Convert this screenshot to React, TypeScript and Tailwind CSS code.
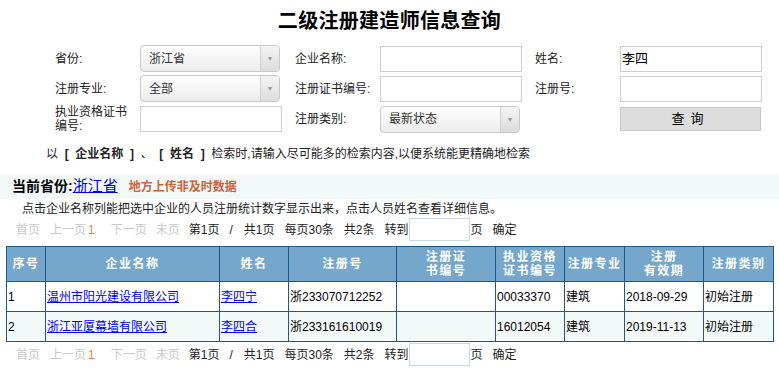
import React from "react";

const font = { fontFamily: '"Liberation Sans", "Noto Sans CJK SC", sans-serif' };

function Select({ value, w }: { value: string; w: string }) {
  return (
    <div className={`${w} h-[27px] flex rounded-[4px] border border-[#c8c8c8] bg-gradient-to-b from-white to-[#ececec] overflow-hidden`}>
      <div className="flex-1 flex items-center pl-[8px] text-[12px] text-[#333]">{value}</div>
      <div className="w-[19px] border-l border-[#d0d0d0] bg-gradient-to-b from-[#f4f4f4] to-[#dcdcdc] flex items-center justify-center">
        <span className="text-[7px] text-[#999] leading-none">▼</span>
      </div>
    </div>
  );
}

function Input({ value }: { value?: string }) {
  return (
    <div className="w-[142px] h-[26px] border border-[#cfcfcf] bg-white flex items-center pl-[1px] text-[13px] text-black">
      {value}
    </div>
  );
}

function Label({ children }: { children: React.ReactNode }) {
  return <div className="w-[85px] text-[12px] text-[#222] leading-[14px]">{children}</div>;
}

function Pager() {
  return (
    <div className="flex items-center h-[23px] pl-[16px] text-[12px] text-[#222]">
      <span className="text-[#c8c8c8]">首页</span>
      <span className="text-[#c8c8c8] ml-[10px]">上一页</span>
      <span className="text-[#f0843c] ml-[2px]">1</span>
      <span className="text-[#c8c8c8] ml-[16px]">下一页</span>
      <span className="text-[#c8c8c8] ml-[9px]">末页</span>
      <span className="ml-[9px]">第1页</span>
      <span className="ml-[10px]">/</span>
      <span className="ml-[11px]">共1页</span>
      <span className="ml-[10px]">每页30条</span>
      <span className="ml-[10px]">共2条</span>
      <span className="ml-[10px]">转到</span>
      <div className="w-[61px] h-[23px] border border-[#c6d9e8] bg-white" />
      <span className="ml-[1px]">页</span>
      <span className="ml-[10px]">确定</span>
    </div>
  );
}

const cols = [39, 174, 69, 108, 99, 69, 60, 79, 70];
const headers: React.ReactNode[] = [
  "序号",
  "企业名称",
  "姓名",
  "注册号",
  <>注册证<br />书编号</>,
  <>执业资格<br />证书编号</>,
  "注册专业",
  <>注册<br />有效期</>,
  "注册类别",
];

const rows = [
  ["1", "温州市阳光建设有限公司", "李四宁", "浙233070712252", "", "00033370", "建筑", "2018-09-29", "初始注册"],
  ["2", "浙江亚厦幕墙有限公司", "李四合", "浙233161610019", "", "16012054", "建筑", "2019-11-13", "初始注册"],
];

export default function App() {
  return (
    <div className="w-[779px] h-[376px] bg-white overflow-hidden" style={font}>
      <h1 className="text-center text-[20px] font-bold text-black pt-[6px] h-[40px] tracking-[0.3px]">二级注册建造师信息查询</h1>

      {/* search form */}
      <div className="pl-[55px] flex flex-col gap-[3px] pt-[5px]">
        <div className="flex items-center h-[27px]">
          <Label>省份:</Label>
          <Select value="浙江省" w="w-[140px]" />
          <div className="w-[15px]" />
          <Label>企业名称:</Label>
          <Input />
          <div className="w-[13px]" />
          <Label>姓名:</Label>
          <Input value="李四" />
        </div>
        <div className="flex items-center h-[27px]">
          <Label>注册专业:</Label>
          <Select value="全部" w="w-[140px]" />
          <div className="w-[15px]" />
          <Label>注册证书编号:</Label>
          <Input />
          <div className="w-[13px]" />
          <Label>注册号:</Label>
          <Input value="" />
        </div>
        <div className="flex items-center h-[28px]">
          <Label>执业资格证书<br />编号:</Label>
          <Input />
          <div className="w-[13px]" />
          <Label>注册类别:</Label>
          <Select value="最新状态" w="w-[140px]" />
          <div className="w-[15px]" />
          <Label>{""}</Label>
          <button className="w-[141px] h-[24px] bg-[#dddddd] border border-[#c9c9c9] text-[13px] text-black tracking-[6px]">查询</button>
        </div>
      </div>

      <div className="pl-[46px] mt-[11px] h-[20px] flex items-center text-[12px] text-[#222] whitespace-pre">
        <span>以  </span>
        <span className="font-bold">[  企业名称  ]</span>
        <span>  、  </span>
        <span className="font-bold">[  姓名  ]</span>
        <span>  检索时,请输入尽可能多的检索内容,以便系统能更精确地检索</span>
      </div>

      <div className="mt-[10px] h-[25px] bg-[#f3f8f9] flex items-center pl-[12px]">
        <span className="text-[14px] font-bold text-black">当前省份:</span>
        <span className="text-[15px] text-[#0000ee] underline">浙江省</span>
        <span className="ml-[11px] text-[12px] font-bold text-[#c8643c]">地方上传非及时数据</span>
      </div>

      <div className="pl-[22px] h-[19px] flex items-center text-[12px] text-[#222]">
        点击企业名称列能把选中企业的人员注册统计数字显示出来，点击人员姓名查看详细信息。
      </div>

      <div className="mt-[0px]">
        <Pager />
      </div>

      <table className="ml-[6px] mt-[5px] border-collapse table-fixed" style={{ width: 767 }}>
        <colgroup>
          {cols.map((c, i) => (
            <col key={i} style={{ width: c }} />
          ))}
        </colgroup>
        <thead>
          <tr className="h-[35px] bg-[#75a6cb]">
            {headers.map((h, i) => (
              <th key={i} className="border-[1.5px] border-[#1d5a87] text-white text-[12px] font-bold leading-[14px] text-center tracking-[1.5px] p-0">
                {h}
              </th>
            ))}
          </tr>
        </thead>
        <tbody>
          {rows.map((r, ri) => (
            <tr key={ri} className={`h-[30px] ${ri % 2 === 1 ? "bg-[#f3f9f9]" : "bg-white"}`}>
              {r.map((c, ci) => (
                <td key={ci} className="border-[1.5px] border-[#1d5a87] text-[12px] text-black px-[1px] py-0 whitespace-nowrap">
                  {ci === 1 || ci === 2 ? <a className="text-[#0000ee] underline">{c}</a> : c}
                </td>
              ))}
            </tr>
          ))}
        </tbody>
      </table>

      <div className="mt-[1px]">
        <Pager />
      </div>
    </div>
  );
}
